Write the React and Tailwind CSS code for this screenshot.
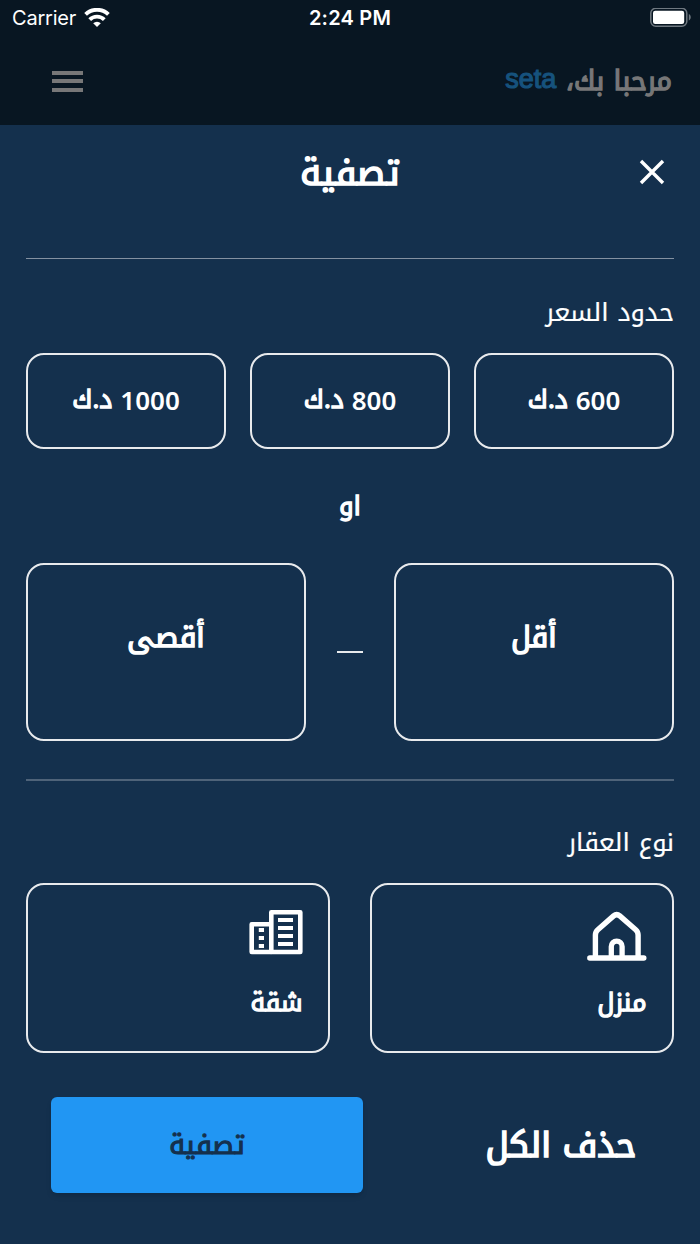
import { useState } from "react";

const prices = [600, 800, 1000];

const WifiIcon = () => (
    <svg width="26" height="20" viewBox="0 0 26 20" fill="none" stroke="white" strokeWidth="3.9">
        <path d="M1.6 6.4a16.4 16.4 0 0 1 22.8 0" />
        <path d="M5.7 11.6a10.4 10.4 0 0 1 14.6 0" />
        <path d="M13 19l-3.8-3.7a5.4 5.4 0 0 1 7.6 0z" fill="white" stroke="none" />
    </svg>
);

const BatteryIcon = () => (
    <svg width="42" height="20" viewBox="0 0 42 20" fill="none">
        <rect x="0.8" y="0.3" width="36" height="18" rx="5" stroke="#6f7880" strokeWidth="1.5" />
        <rect x="3" y="2.7" width="31.2" height="13.2" rx="2.2" fill="white" />
        <path d="M38.8 6.1c2.6 1 2.6 5.4 0 6.4z" fill="#6f7880" />
    </svg>
);

const HouseIcon = () => (
    <svg width="60" height="52" viewBox="0 0 60 52" fill="none" stroke="white" strokeLinecap="round" strokeLinejoin="round">
        <path d="M8.4 47V25q0-3.2 2.4-5.3L26.6 5.9q3.1-2.6 6.2 0l15.9 13.8q2.4 2.1 2.4 5.3v22" strokeWidth="5.4" />
        <path d="M24.3 47V36.5a5.4 5.4 0 0 1 10.8 0V47" strokeWidth="5.3" />
        <path d="M2.8 48h54" strokeWidth="5.4" />
    </svg>
);

const ApartmentIcon = () => (
    <svg width="54" height="45" viewBox="0 0 54 45" fill="none" stroke="white" strokeLinejoin="round">
        <path d="M22.3 2.3h29v39.7h-29z" strokeWidth="4.6" />
        <path d="M22.3 14.2H2.7V42h19.6" strokeWidth="4.6" />
        <path d="M29 10h15M29 18h15M29 26h15M29 34h15" strokeWidth="4.2" />
        <path d="M9.8 20h5.2M9.8 28h5.2M9.8 36h5.2" strokeWidth="4.2" />
    </svg>
);

const types = [
    { id: "house", label: "منزل", Icon: HouseIcon },
    { id: "apartment", label: "شقة", Icon: ApartmentIcon },
];

const App = () => {
    const [price, setPrice] = useState(null);
    const [type, setType] = useState(null);

    const clearAll = () => {
        setPrice(null);
        setType(null);
    };

    return (
        <div dir="rtl" className="flex h-[1244px] w-[700px] flex-col overflow-hidden bg-[#081622] font-['Noto_Kufi_Arabic','DejaVu_Sans',sans-serif] text-white">
            {/* Status bar */}
            <div dir="ltr" className="grid h-9 grid-cols-3 items-center pl-3 pr-2 font-['Inter',sans-serif] text-[20px]">
                <div className="flex items-center gap-2">
                    <span className="-tracking-[0.01em]">Carrier</span>
                    <WifiIcon />
                </div>
                <span className="-ml-1 text-center font-semibold tracking-[0.01em]">2:24 PM</span>
                <div className="flex justify-end">
                    <BatteryIcon />
                </div>
            </div>

            {/* Header */}
            <header className="flex h-[89px] items-center justify-between pl-[52px] pr-7">
                <div className="flex items-center gap-2.5 pt-0.5 text-[#777778]">
                    <span className="text-[27px] [-webkit-text-stroke:1.3px]">مرحبا بك،</span>
                    <span className="pb-1 font-['Liberation_Sans',sans-serif] text-[27px] text-[#16527d] [-webkit-text-stroke:1.2px]">seta</span>
                </div>
                <button className="flex w-[31px] flex-col gap-[4.5px] pt-px">
                    <span className="h-1 w-full bg-[#777778]"></span>
                    <span className="h-1 w-full bg-[#777778]"></span>
                    <span className="h-1 w-full bg-[#777778]"></span>
                </button>
            </header>

            {/* Filter sheet */}
            <main className="flex flex-1 flex-col bg-[#14304d] px-[26px]">
                <div className="grid h-[134px] grid-cols-3 items-start border-b border-[#8491a1] pt-6">
                    <button className="mr-[9px] mt-[10px] w-fit">
                        <svg width="26" height="26" viewBox="0 0 26 26" stroke="white" strokeWidth="3.4">
                            <path d="M2 2l22 22M24 2L2 24" />
                        </svg>
                    </button>
                    <h1 className="text-center text-[35.5px] leading-[48px] [-webkit-text-stroke:1.7px]">تصفية</h1>
                </div>

                <h2 className="mt-9 text-[25.5px] leading-[36px] [-webkit-text-stroke:0.2px]">حدود السعر</h2>
                <div className="mt-[22px] grid grid-cols-3 gap-6">
                    {prices.map((value) => (
                        <button
                            key={value}
                            onClick={() => setPrice(value)}
                            className={`flex h-24 items-center justify-center gap-2 rounded-[18px] border-2 border-white/90 pb-0.5 ${price === value ? "bg-white/10" : ""}`}
                        >
                            <span className="font-['Noto_Sans',sans-serif] text-[26px] font-semibold">{value}</span>
                            <span className="text-[25.5px] [-webkit-text-stroke:1.3px]">د.ك</span>
                        </button>
                    ))}
                </div>

                <p className="mt-10 h-9 text-center text-[26px] leading-9 [-webkit-text-stroke:1.3px]">او</p>

                <div className="mt-[38px] flex items-center justify-between">
                    <button className="h-[178px] w-[280px] rounded-[18px] border-2 border-white/90 pb-7 text-[29px] [-webkit-text-stroke:1.5px]">أقل</button>
                    <span className="h-0.5 w-[26px] bg-white/90"></span>
                    <button className="h-[178px] w-[280px] rounded-[18px] border-2 border-white/90 pb-7 text-[29px] [-webkit-text-stroke:1.5px]">أقصى</button>
                </div>

                <div className="mt-[38px] h-0.5 bg-[#4f6379]"></div>

                <h2 className="mt-[44px] text-[25.5px] leading-[36px] [-webkit-text-stroke:0.2px]">نوع العقار</h2>
                <div className="mt-[22px] flex justify-between">
                    {types.map(({ id, label, Icon }) => (
                        <button
                            key={id}
                            onClick={() => setType(id)}
                            className={`flex h-[170px] w-[304px] flex-col items-start rounded-[18px] border-2 border-white/90 px-[25.5px] pt-[25px] ${type === id ? "bg-white/10" : ""}`}
                        >
                            <span className="h-[75px]"><Icon /></span>
                            <span className="text-[25px] leading-9 [-webkit-text-stroke:1.3px]">{label}</span>
                        </button>
                    ))}
                </div>

                <div className="mt-11 flex items-center justify-between px-[25px]">
                    <button onClick={clearAll} className="w-[176px] text-[34px] [-webkit-text-stroke:1.7px]">حذف الكل</button>
                    <button className="h-24 w-[312px] rounded-md bg-[#2196f3] text-[27px] text-[#14304d] shadow-md [-webkit-text-stroke:1.2px]">تصفية</button>
                </div>
            </main>
        </div>
    );
};

export default App;
